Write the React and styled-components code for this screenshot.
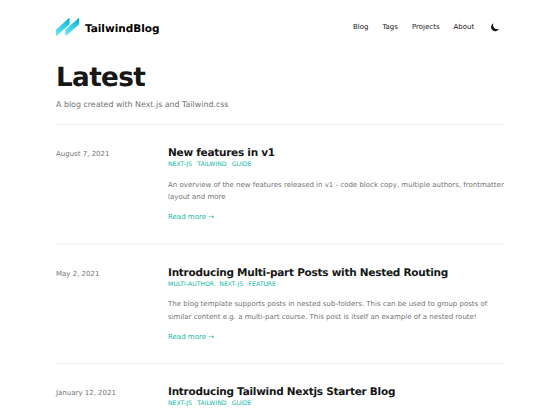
import React from "react";
import styled, { createGlobalStyle } from "styled-components";

const GlobalStyle = createGlobalStyle`
  html { font-size: 16px; }
  body {
    margin: 0;
    height: 420px;
    overflow: hidden;
    background: #fff;
    font-family: "DejaVu Sans", sans-serif;
    text-rendering: geometricPrecision;
    color: #171717;
  }
  * { box-sizing: border-box; }
  h1, h2, p, ul { margin: 0; padding: 0; }
  a { color: inherit; text-decoration: none; }
`;

const Viewport = styled.div`
  width: 560px;
  height: 420px;
  overflow: hidden;
`;

const Page = styled.div`
  width: 1280px;
  height: 960px;
  padding: 0 128px;
  transform: scale(0.4375);
  transform-origin: 0 0;
`;

const Header = styled.header`
  display: flex;
  align-items: center;
  justify-content: space-between;
  padding: 2.5rem 0;
  height: 124px;
`;

const Brand = styled.a`
  display: flex;
  align-items: center;
  gap: 0.75rem;
  color: #000;
  font-size: 1.5rem;
  line-height: 2rem;
  font-weight: 600;
`;

const BrandName = styled.span`
  padding-top: 5px;
`;

const Logo = styled.svg`
  width: 54px;
  height: 43.7px;
  display: block;
`;

const Nav = styled.nav`
  display: flex;
  align-items: center;
  line-height: 1.5rem;
`;

const NavLink = styled.a`
  padding: 0 1rem;
`;

const ThemeButton = styled.button`
  width: 2rem;
  height: 2rem;
  margin: 0 0.25rem 0 1rem;
  padding: 0.25rem;
  border: 0;
  background: none;
  color: #171717;

  svg {
    display: block;
    width: 1.5rem;
    height: 1.5rem;
  }
`;

const Intro = styled.section`
  padding: 1.5rem 0 2rem;
`;

const PageTitle = styled.h1`
  font-size: 3.75rem;
  line-height: 3.5rem;
  font-weight: 800;
  letter-spacing: -0.025em;
`;

const Subtitle = styled.p`
  margin-top: 1.25rem;
  padding-top: 1px;
  margin-bottom: -1px;
  font-size: 1.125rem;
  line-height: 1.75rem;
  color: #737373;
`;

const PostList = styled.ul`
  list-style: none;
`;

const Post = styled.li`
  display: grid;
  grid-template-columns: 1fr 3fr;
  align-items: baseline;
  height: 273px;
  padding-top: 46.6px;
  border-top: 2px solid #ebebeb;
`;

const PostDate = styled.time`
  line-height: 1.5rem;
  color: #737373;
`;

const PostTitle = styled.h2`
  font-size: 1.5rem;
  line-height: 2rem;
  font-weight: 700;
  letter-spacing: -0.025em;
`;

const Tags = styled.div`
  display: flex;
  gap: 0.75rem;
  padding-top: 1px;
  font-size: 0.875rem;
  line-height: 1.25rem;
  text-transform: uppercase;
  color: #14b8a6;
`;

const Summary = styled.p`
  margin-top: 22.4px;
  line-height: 1.75rem;
  color: #737373;
`;

const ReadMore = styled.a`
  display: block;
  margin-top: 1.25rem;
  line-height: 1.5rem;
  && { color: #14b8a6; }
`;

const links = ["Blog", "Tags", "Projects", "About"];

const posts = [
  {
    date: "August 7, 2021",
    title: "New features in v1",
    tags: ["next-js", "tailwind", "guide"],
    summary:
      "An overview of the new features released in v1 - code block copy, multiple authors, frontmatter layout and more",
  },
  {
    date: "May 2, 2021",
    title: "Introducing Multi-part Posts with Nested Routing",
    tags: ["multi-author", "next-js", "feature"],
    summary:
      "The blog template supports posts in nested sub-folders. This can be used to group posts of similar content e.g. a multi-part course. This post is itself an example of a nested route!",
  },
  {
    date: "January 12, 2021",
    title: "Introducing Tailwind Nextjs Starter Blog",
    tags: ["next-js", "tailwind", "guide"],
  },
];

export default function App() {
  return (
    <Viewport>
      <GlobalStyle />
      <Page>
        <Header>
          <Brand href="#">
            <Logo viewBox="0 0 54 43.7">
              <defs>
                <linearGradient id="bar" x1="0.6" y1="0" x2="0.4" y2="1">
                  <stop offset="0" stopColor="#06b6d4" />
                  <stop offset="1" stopColor="#67e8f9" />
                </linearGradient>
              </defs>
              <path fill="url(#bar)" d="M31 0V15.5L0 43.5V28Z" />
              <path fill="url(#bar)" d="M53 0V15.5L21.5 43.7V28.2Z" />
            </Logo>
            <BrandName>TailwindBlog</BrandName>
          </Brand>
          <Nav>
            {links.map((label) => (
              <NavLink href="#" key={label}>{label}</NavLink>
            ))}
            <ThemeButton aria-label="Toggle dark mode">
              <svg viewBox="0 0 20 20" fill="currentColor">
                <path d="M17.293 13.293A8 8 0 016.707 2.707a8.001 8.001 0 1010.586 10.586z" />
              </svg>
            </ThemeButton>
          </Nav>
        </Header>
        <main>
          <Intro>
            <PageTitle>Latest</PageTitle>
            <Subtitle>A blog created with Next.js and Tailwind.css</Subtitle>
          </Intro>
          <PostList>
            {posts.map((post) => (
              <Post key={post.title}>
                <PostDate>{post.date}</PostDate>
                <article>
                  <PostTitle>{post.title}</PostTitle>
                  <Tags>
                    {post.tags.map((tag) => (
                      <a href="#" key={tag}>{tag}</a>
                    ))}
                  </Tags>
                  {post.summary && (
                    <>
                      <Summary>{post.summary}</Summary>
                      <ReadMore href="#">Read more →</ReadMore>
                    </>
                  )}
                </article>
              </Post>
            ))}
          </PostList>
        </main>
      </Page>
    </Viewport>
  );
}
